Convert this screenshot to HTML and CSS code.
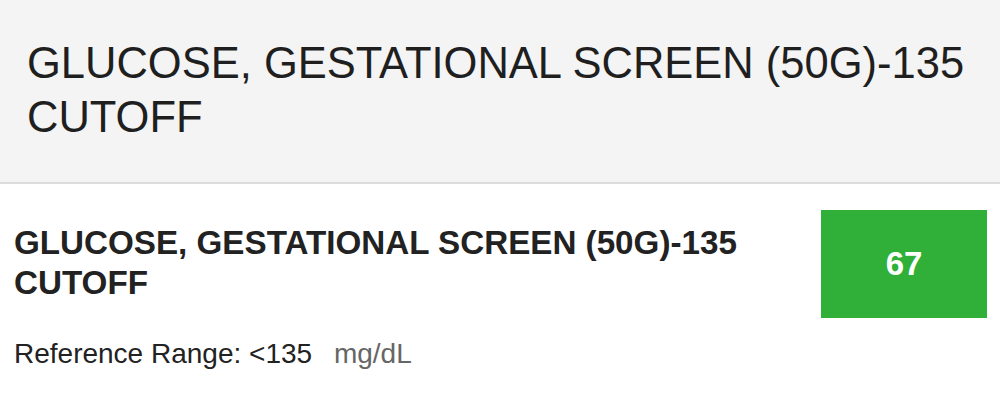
FILE: index.html
```html
<!DOCTYPE html>
<html>
<head>
<meta charset="utf-8">
<link rel="stylesheet" href="styles.css">
</head>
<body>
<header class="page-header">
  <h1 class="page-title">GLUCOSE, GESTATIONAL SCREEN (50G)-135 CUTOFF</h1>
</header>
<section class="result">
  <div class="result-info">
    <h2 class="result-name">GLUCOSE, GESTATIONAL SCREEN (50G)-135 CUTOFF</h2>
    <p class="result-range">Reference Range: &lt;135 <span class="unit">mg/dL</span></p>
  </div>
  <div class="result-value">67</div>
</section>
</body>
</html>
```

FILE: styles.css
```css
html, body {
  margin: 0;
  padding: 0;
  background: #ffffff;
  font-family: "Liberation Sans", Arial, Helvetica, sans-serif;
  color: #222222;
}

.page-header {
  background: #f4f4f4;
  border-bottom: 2px solid #dcdcdc;
  box-sizing: border-box;
  height: 184px;
  padding: 37px 20px 0 27px;
}

.page-title {
  margin: 0;
  font-weight: normal;
  font-size: 43.5px;
  line-height: 53.5px;
  color: #1f1f1f;
}

.result {
  display: flex;
  justify-content: space-between;
  align-items: flex-start;
  padding: 26px 13px 0 14px;
  gap: 20px;
}

.result-info {
  flex: 1;
  padding-top: 13px;
}

.result-name {
  margin: 0;
  font-weight: bold;
  font-size: 33.2px;
  line-height: 40px;
  color: #222222;
}

.result-range {
  margin: 35px 0 0 0;
  font-size: 28px;
  line-height: 32px;
  color: #222222;
}

.unit {
  color: #666666;
  margin-left: 14px;
}

.result-value {
  width: 166px;
  height: 108px;
  flex: none;
  background: #30b038;
  color: #ffffff;
  font-weight: bold;
  font-size: 33px;
  display: flex;
  align-items: center;
  justify-content: center;
}
```
